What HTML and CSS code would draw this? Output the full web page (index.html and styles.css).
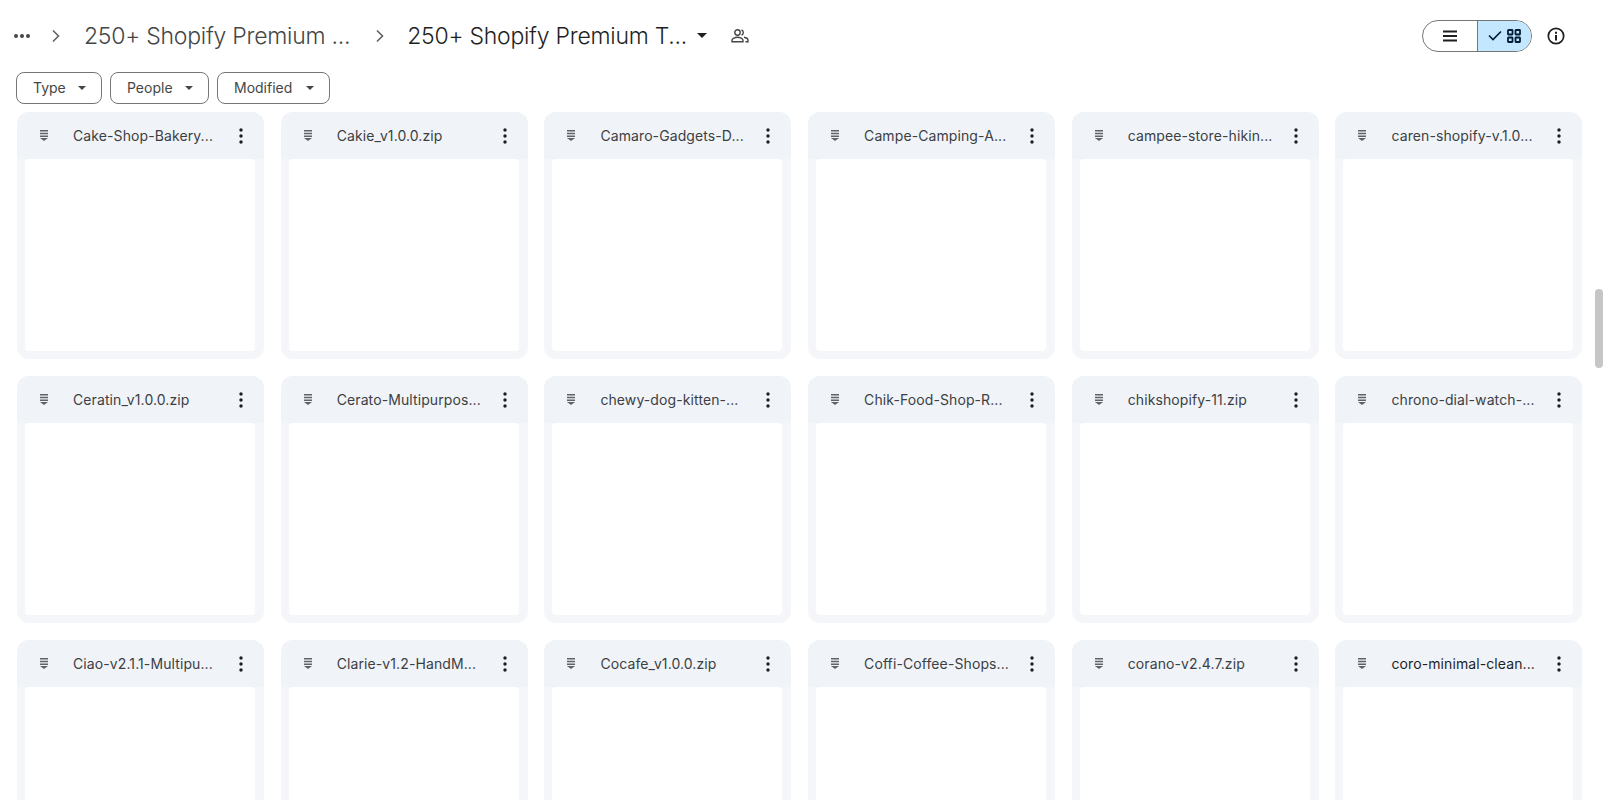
FILE: index.html
```html
<!DOCTYPE html>
<html lang="en">
<head>
<meta charset="utf-8">
<title>250+ Shopify Premium Themes</title>
<link rel="stylesheet" href="styles.css">
</head>
<body>
<div class="page">
  <header class="topbar">
    <svg class="dots" width="18" height="6" viewBox="0 0 18 6"><circle cx="3" cy="3" r="2"/><circle cx="9" cy="3" r="2"/><circle cx="15" cy="3" r="2"/></svg>
    <svg class="chev chev-first" width="10" height="14" viewBox="0 0 10 14"><path d="M2 1.500 7.500 7 2 12.500"/></svg>
    <span class="crumb">250+ Shopify Premium ...</span>
    <svg class="chev chev-second" width="10" height="14" viewBox="0 0 10 14"><path d="M2 1.500 7.500 7 2 12.500"/></svg>
    <span class="crumb crumb-current">250+ Shopify Premium T...</span>
    <svg class="title-caret" width="10" height="5" viewBox="0 0 10 5"><path d="M0 0h10L5 5z"/></svg>
    <svg class="people" width="18" height="14" viewBox="0 0 18 14"><circle cx="6.500" cy="3.500" r="2.700"/><path d="M1 12.800v-1.600c0-1.800 3-3 5.500-3s5.500 1.200 5.500 3v1.600z"/><path d="M10.500 1a2.700 2.700 0 0 1 0 5.100M13 8.300c2 .4 4 1.300 4 2.900v1.600h-2.500"/></svg>
    <div class="spacer"></div>
    <div class="switch">
      <div class="switch-part">
        <svg width="16" height="12" viewBox="0 0 16 12"><path d="M1 1.500h14M1 6h14M1 10.500h14"/></svg>
      </div>
      <div class="switch-part switch-on">
        <svg class="tick" width="14" height="11" viewBox="0 0 14 11"><path d="M1 5.500 5 9.500 13 1.500"/></svg>
        <svg class="grid-icon" width="14" height="14" viewBox="0 0 14 14"><rect x="1" y="1" width="4.500" height="4.500" rx=".5"/><rect x="8.500" y="1" width="4.500" height="4.500" rx=".5"/><rect x="1" y="8.500" width="4.500" height="4.500" rx=".5"/><rect x="8.500" y="8.500" width="4.500" height="4.500" rx=".5"/></svg>
      </div>
    </div>
    <svg class="info" width="18" height="18" viewBox="0 0 18 18"><circle class="info-ring" cx="9" cy="9" r="7.700"/><path class="info-dot" d="M8 8h2v5.500H8zM8 4.700h2v2H8z"/></svg>
  </header>

  <div class="filters">
    <button class="chip chip-type">Type<svg width="8" height="4" viewBox="0 0 8 4"><path d="M0 0h8L4 4z"/></svg></button>
    <button class="chip chip-people">People<svg width="8" height="4" viewBox="0 0 8 4"><path d="M0 0h8L4 4z"/></svg></button>
    <button class="chip chip-modified">Modified<svg width="8" height="4" viewBox="0 0 8 4"><path d="M0 0h8L4 4z"/></svg></button>
  </div>

  <main class="grid">
    <article class="card"><div class="card-head"><svg class="zip" width="10" height="11" viewBox="0 0 10 11"><path d="M1 0h8v1.500H1zM1 2.700h8v1.500H1zM1 5.400h8v1.500H1zM1 8h8L5 11z"/></svg><span class="name">Cake-Shop-Bakery...</span><svg class="more" width="4" height="16" viewBox="0 0 4 16"><circle cx="2" cy="2" r="1.700"/><circle cx="2" cy="8" r="1.700"/><circle cx="2" cy="14" r="1.700"/></svg></div><div class="thumb"></div></article>
    <article class="card"><div class="card-head"><svg class="zip" width="10" height="11" viewBox="0 0 10 11"><path d="M1 0h8v1.500H1zM1 2.700h8v1.500H1zM1 5.400h8v1.500H1zM1 8h8L5 11z"/></svg><span class="name">Cakie_v1.0.0.zip</span><svg class="more" width="4" height="16" viewBox="0 0 4 16"><circle cx="2" cy="2" r="1.700"/><circle cx="2" cy="8" r="1.700"/><circle cx="2" cy="14" r="1.700"/></svg></div><div class="thumb"></div></article>
    <article class="card"><div class="card-head"><svg class="zip" width="10" height="11" viewBox="0 0 10 11"><path d="M1 0h8v1.500H1zM1 2.700h8v1.500H1zM1 5.400h8v1.500H1zM1 8h8L5 11z"/></svg><span class="name">Camaro-Gadgets-D...</span><svg class="more" width="4" height="16" viewBox="0 0 4 16"><circle cx="2" cy="2" r="1.700"/><circle cx="2" cy="8" r="1.700"/><circle cx="2" cy="14" r="1.700"/></svg></div><div class="thumb"></div></article>
    <article class="card"><div class="card-head"><svg class="zip" width="10" height="11" viewBox="0 0 10 11"><path d="M1 0h8v1.500H1zM1 2.700h8v1.500H1zM1 5.400h8v1.500H1zM1 8h8L5 11z"/></svg><span class="name">Campe-Camping-A...</span><svg class="more" width="4" height="16" viewBox="0 0 4 16"><circle cx="2" cy="2" r="1.700"/><circle cx="2" cy="8" r="1.700"/><circle cx="2" cy="14" r="1.700"/></svg></div><div class="thumb"></div></article>
    <article class="card"><div class="card-head"><svg class="zip" width="10" height="11" viewBox="0 0 10 11"><path d="M1 0h8v1.500H1zM1 2.700h8v1.500H1zM1 5.400h8v1.500H1zM1 8h8L5 11z"/></svg><span class="name">campee-store-hikin...</span><svg class="more" width="4" height="16" viewBox="0 0 4 16"><circle cx="2" cy="2" r="1.700"/><circle cx="2" cy="8" r="1.700"/><circle cx="2" cy="14" r="1.700"/></svg></div><div class="thumb"></div></article>
    <article class="card"><div class="card-head"><svg class="zip" width="10" height="11" viewBox="0 0 10 11"><path d="M1 0h8v1.500H1zM1 2.700h8v1.500H1zM1 5.400h8v1.500H1zM1 8h8L5 11z"/></svg><span class="name">caren-shopify-v.1.0...</span><svg class="more" width="4" height="16" viewBox="0 0 4 16"><circle cx="2" cy="2" r="1.700"/><circle cx="2" cy="8" r="1.700"/><circle cx="2" cy="14" r="1.700"/></svg></div><div class="thumb"></div></article>

    <article class="card"><div class="card-head"><svg class="zip" width="10" height="11" viewBox="0 0 10 11"><path d="M1 0h8v1.500H1zM1 2.700h8v1.500H1zM1 5.400h8v1.500H1zM1 8h8L5 11z"/></svg><span class="name">Ceratin_v1.0.0.zip</span><svg class="more" width="4" height="16" viewBox="0 0 4 16"><circle cx="2" cy="2" r="1.700"/><circle cx="2" cy="8" r="1.700"/><circle cx="2" cy="14" r="1.700"/></svg></div><div class="thumb"></div></article>
    <article class="card"><div class="card-head"><svg class="zip" width="10" height="11" viewBox="0 0 10 11"><path d="M1 0h8v1.500H1zM1 2.700h8v1.500H1zM1 5.400h8v1.500H1zM1 8h8L5 11z"/></svg><span class="name">Cerato-Multipurpos...</span><svg class="more" width="4" height="16" viewBox="0 0 4 16"><circle cx="2" cy="2" r="1.700"/><circle cx="2" cy="8" r="1.700"/><circle cx="2" cy="14" r="1.700"/></svg></div><div class="thumb"></div></article>
    <article class="card"><div class="card-head"><svg class="zip" width="10" height="11" viewBox="0 0 10 11"><path d="M1 0h8v1.500H1zM1 2.700h8v1.500H1zM1 5.400h8v1.500H1zM1 8h8L5 11z"/></svg><span class="name">chewy-dog-kitten-...</span><svg class="more" width="4" height="16" viewBox="0 0 4 16"><circle cx="2" cy="2" r="1.700"/><circle cx="2" cy="8" r="1.700"/><circle cx="2" cy="14" r="1.700"/></svg></div><div class="thumb"></div></article>
    <article class="card"><div class="card-head"><svg class="zip" width="10" height="11" viewBox="0 0 10 11"><path d="M1 0h8v1.500H1zM1 2.700h8v1.500H1zM1 5.400h8v1.500H1zM1 8h8L5 11z"/></svg><span class="name">Chik-Food-Shop-R...</span><svg class="more" width="4" height="16" viewBox="0 0 4 16"><circle cx="2" cy="2" r="1.700"/><circle cx="2" cy="8" r="1.700"/><circle cx="2" cy="14" r="1.700"/></svg></div><div class="thumb"></div></article>
    <article class="card"><div class="card-head"><svg class="zip" width="10" height="11" viewBox="0 0 10 11"><path d="M1 0h8v1.500H1zM1 2.700h8v1.500H1zM1 5.400h8v1.500H1zM1 8h8L5 11z"/></svg><span class="name">chikshopify-11.zip</span><svg class="more" width="4" height="16" viewBox="0 0 4 16"><circle cx="2" cy="2" r="1.700"/><circle cx="2" cy="8" r="1.700"/><circle cx="2" cy="14" r="1.700"/></svg></div><div class="thumb"></div></article>
    <article class="card"><div class="card-head"><svg class="zip" width="10" height="11" viewBox="0 0 10 11"><path d="M1 0h8v1.500H1zM1 2.700h8v1.500H1zM1 5.400h8v1.500H1zM1 8h8L5 11z"/></svg><span class="name">chrono-dial-watch-...</span><svg class="more" width="4" height="16" viewBox="0 0 4 16"><circle cx="2" cy="2" r="1.700"/><circle cx="2" cy="8" r="1.700"/><circle cx="2" cy="14" r="1.700"/></svg></div><div class="thumb"></div></article>

    <article class="card"><div class="card-head"><svg class="zip" width="10" height="11" viewBox="0 0 10 11"><path d="M1 0h8v1.500H1zM1 2.700h8v1.500H1zM1 5.400h8v1.500H1zM1 8h8L5 11z"/></svg><span class="name">Ciao-v2.1.1-Multipu...</span><svg class="more" width="4" height="16" viewBox="0 0 4 16"><circle cx="2" cy="2" r="1.700"/><circle cx="2" cy="8" r="1.700"/><circle cx="2" cy="14" r="1.700"/></svg></div><div class="thumb"></div></article>
    <article class="card"><div class="card-head"><svg class="zip" width="10" height="11" viewBox="0 0 10 11"><path d="M1 0h8v1.500H1zM1 2.700h8v1.500H1zM1 5.400h8v1.500H1zM1 8h8L5 11z"/></svg><span class="name">Clarie-v1.2-HandM...</span><svg class="more" width="4" height="16" viewBox="0 0 4 16"><circle cx="2" cy="2" r="1.700"/><circle cx="2" cy="8" r="1.700"/><circle cx="2" cy="14" r="1.700"/></svg></div><div class="thumb"></div></article>
    <article class="card"><div class="card-head"><svg class="zip" width="10" height="11" viewBox="0 0 10 11"><path d="M1 0h8v1.500H1zM1 2.700h8v1.500H1zM1 5.400h8v1.500H1zM1 8h8L5 11z"/></svg><span class="name">Cocafe_v1.0.0.zip</span><svg class="more" width="4" height="16" viewBox="0 0 4 16"><circle cx="2" cy="2" r="1.700"/><circle cx="2" cy="8" r="1.700"/><circle cx="2" cy="14" r="1.700"/></svg></div><div class="thumb"></div></article>
    <article class="card"><div class="card-head"><svg class="zip" width="10" height="11" viewBox="0 0 10 11"><path d="M1 0h8v1.500H1zM1 2.700h8v1.500H1zM1 5.400h8v1.500H1zM1 8h8L5 11z"/></svg><span class="name">Coffi-Coffee-Shops...</span><svg class="more" width="4" height="16" viewBox="0 0 4 16"><circle cx="2" cy="2" r="1.700"/><circle cx="2" cy="8" r="1.700"/><circle cx="2" cy="14" r="1.700"/></svg></div><div class="thumb"></div></article>
    <article class="card"><div class="card-head"><svg class="zip" width="10" height="11" viewBox="0 0 10 11"><path d="M1 0h8v1.500H1zM1 2.700h8v1.500H1zM1 5.400h8v1.500H1zM1 8h8L5 11z"/></svg><span class="name">corano-v2.4.7.zip</span><svg class="more" width="4" height="16" viewBox="0 0 4 16"><circle cx="2" cy="2" r="1.700"/><circle cx="2" cy="8" r="1.700"/><circle cx="2" cy="14" r="1.700"/></svg></div><div class="thumb"></div></article>
    <article class="card"><div class="card-head"><svg class="zip" width="10" height="11" viewBox="0 0 10 11"><path d="M1 0h8v1.500H1zM1 2.700h8v1.500H1zM1 5.400h8v1.500H1zM1 8h8L5 11z"/></svg><span class="name name-strong">coro-minimal-clean...</span><svg class="more" width="4" height="16" viewBox="0 0 4 16"><circle cx="2" cy="2" r="1.700"/><circle cx="2" cy="8" r="1.700"/><circle cx="2" cy="14" r="1.700"/></svg></div><div class="thumb"></div></article>
  </main>
  <div class="scroll-thumb"></div>
</div>
</body>
</html>
```

FILE: styles.css
```css
* { box-sizing: border-box; }

html, body {
  margin: 0;
  height: 100%;
  background: #fff;
  overflow: hidden;
}

body {
  font-family: Inter, "Noto Sans", sans-serif;
  color: #1f1f1f;
}

.page {
  position: relative;
  width: 1603px;
  height: 800px;
  overflow: hidden;
}

.topbar {
  display: flex;
  align-items: center;
  height: 72px;
  padding: 0 38px 1px 13px;
}

.dots { fill: #444746; }

.chev {
  fill: none;
  stroke: #5f6368;
  stroke-width: 1.600;
}

.chev-first { margin-left: 20px; }
.chev-second { margin-left: 25px; }

.crumb {
  font-size: 23px;
  line-height: 32px;
  font-weight: 300;
  letter-spacing: -.25px;
  color: #444746;
  white-space: nowrap;
  margin-left: 23px;
}

.crumb-current {
  color: #1f1f1f;
  margin-left: 22px;
}

.title-caret {
  margin-left: 10px;
  fill: #1f1f1f;
}

.people {
  margin-left: 24px;
  fill: none;
  stroke: #444746;
  stroke-width: 1.400;
}

.spacer { flex: 1; }

.switch {
  display: flex;
  width: 110px;
  height: 32px;
  border: 1px solid #747775;
  border-radius: 16px;
  overflow: hidden;
}

.switch-part {
  flex: 1;
  display: flex;
  align-items: center;
  justify-content: center;
  stroke: #1f1f1f;
  fill: none;
  stroke-width: 2;
}

.switch-on {
  gap: 5px;
  background: #c2e7ff;
  border-left: 1px solid #747775;
  stroke: #001d35;
}

.tick { stroke-width: 1.600; }
.grid-icon { stroke-width: 1.800; }

.info { margin-left: 15px; }
.info-ring { fill: none; stroke: #1f1f1f; stroke-width: 1.700; }
.info-dot { fill: #1f1f1f; }

.filters {
  display: flex;
  gap: 8px;
  padding-left: 16px;
  height: 40px;
}

.chip {
  display: flex;
  align-items: center;
  justify-content: space-between;
  height: 32px;
  padding: 0 15px 1px 16px;
  background: #fff;
  border: 1px solid #747775;
  border-radius: 8px;
  font-family: inherit;
  font-size: 14px;
  color: #444746;
}

.chip svg { fill: #444746; }

.chip-type { width: 86px; }
.chip-people { width: 99px; }
.chip-modified { width: 113px; }

.grid {
  display: grid;
  grid-template-columns: repeat(6, 247px);
  grid-auto-rows: 247px;
  column-gap: 16.700px;
  row-gap: 17px;
  padding-left: 17px;
}

.card {
  display: flex;
  flex-direction: column;
  padding: 0 8px 8px;
  background: #f4f6fa;
  border-radius: 12px;
  overflow: hidden;
}

.card-head {
  display: flex;
  align-items: center;
  height: 47px;
  flex: none;
  margin: 0 -8px;
  padding: 0 8px;
  background: #f0f4f9;
}

.zip {
  flex: none;
  margin-left: 14px;
  fill: #5f6368;
}

.name {
  flex: 1;
  margin-left: 24px;
  font-size: 14px;
  line-height: 20px;
  letter-spacing: .1px;
  color: #3c4043;
  white-space: nowrap;
}

.name-strong { color: #1f1f1f; }

.more {
  flex: none;
  margin-right: 13px;
  fill: #1f1f1f;
}

.thumb {
  flex: 1;
  margin-right: 1px;
  background: #fff;
  border-radius: 4px;
}

.scroll-thumb {
  position: absolute;
  right: 0;
  top: 289px;
  width: 8px;
  height: 79px;
  background: #c4c7c5;
  border-radius: 4px;
}
```
